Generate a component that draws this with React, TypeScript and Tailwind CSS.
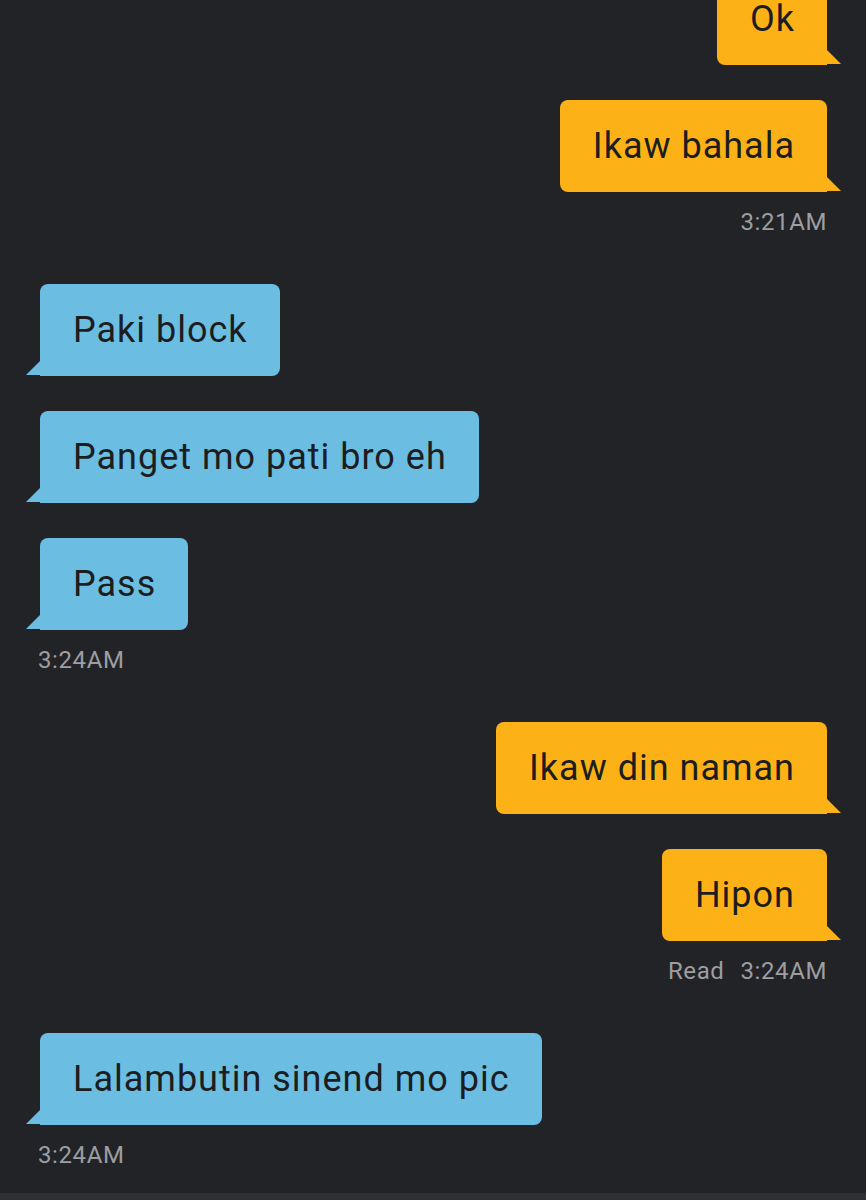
type Msg = { text: string; out: boolean; first?: boolean };
type Group = { out: boolean; msgs: string[]; stamp?: string; read?: boolean };

const groups: Group[] = [
  { out: true, msgs: ['Ok', 'Ikaw bahala'], stamp: '3:21AM' },
  { out: false, msgs: ['Paki block', 'Panget mo pati bro eh', 'Pass'], stamp: '3:24AM' },
  { out: true, msgs: ['Ikaw din naman', 'Hipon'], stamp: '3:24AM', read: true },
  { out: false, msgs: ['Lalambutin sinend mo pic'], stamp: '3:24AM' },
];

function Bubble({ text, out, first }: Msg) {
  return (
    <div className={`relative flex h-[92px] items-center px-[33px] text-[36px] tracking-[1px] text-[#1c1d20] ${out ? 'self-end rounded-l-[8px] rounded-tr-[8px] bg-[#fcb217]' : 'self-start rounded-r-[8px] rounded-tl-[8px] bg-[#6cbde2]'} ${first ? '-mt-[27px]' : ''}`}>
      <span className="-mr-[1px] leading-none">{text}</span>
      {/* tail */}
      {out ? (
        <svg className="absolute bottom-0 -right-[15px]" width="16" height="16" viewBox="0 0 16 16">
          <polygon points="0,0 15,15 0,15" fill="#fcb217" />
        </svg>
      ) : (
        <svg className="absolute bottom-0 -left-[15px]" width="16" height="16" viewBox="0 0 16 16">
          <polygon points="16,0 1,15 16,15" fill="#6cbde2" />
        </svg>
      )}
    </div>
  );
}

export default function App() {
  return (
    <div
      className="flex h-[1200px] w-[866px] flex-col overflow-hidden bg-[#222326]"
      style={{ fontFamily: 'Roboto, "Noto Sans", sans-serif' }}
    >
      <div className="flex flex-1 flex-col pl-[40px] pr-[39px]">
        {groups.map((g, gi) => (
          <div key={gi} className={`flex flex-col gap-[35px] ${gi > 0 ? 'mt-[47px]' : ''}`}>
            {g.msgs.map((m, mi) => (
              <Bubble key={mi} text={m} out={g.out} first={gi === 0 && mi === 0} />
            ))}
            {g.stamp && (
              <div
                className={`-mt-[20px] flex gap-[16px] text-[24px] leading-[30px] tracking-[0.6px] text-[#9c9ea2] ${g.out ? 'justify-end' : 'justify-start -ml-[2px]'}`}
              >
                {g.read && <span>Read</span>}
                <span>{g.stamp}</span>
              </div>
            )}
          </div>
        ))}
      </div>
      <div className="h-[7px] shrink-0 bg-[#2e2f33]" />
    </div>
  );
}
